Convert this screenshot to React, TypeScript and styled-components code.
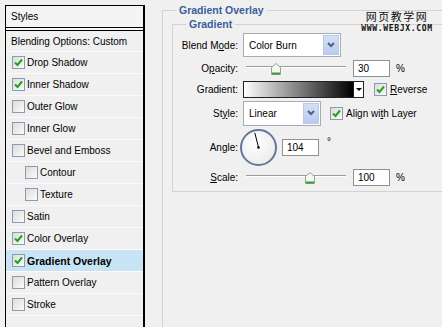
import styled, { createGlobalStyle } from "styled-components"

const Global = createGlobalStyle`
  body {
    margin: 0;
    background: #f0f0f0;
    font-family: "Liberation Sans", Arial, sans-serif;
    font-size: 10px;
    color: #000;
    overflow: hidden;
  }
`

const Page = styled.div`
  display: flex;
  position: relative;
  width: 442px;
  height: 327px;
  overflow: hidden;
`

const Sidebar = styled.div`
  box-sizing: border-box;
  width: 140px;
  height: 340px;
  margin: 5px 0 0 5px;
  border: 1px solid #000;
  border-right-width: 2px;
  background: #f0f0f0;
  flex-shrink: 0;
`

const Header = styled.div`
  height: 21px;
  line-height: 21px;
  padding-left: 5px;
  border-bottom: 4px double #000;
  background: #f4f4f4;
`

const Item = styled.div<{ $indent?: boolean; $active?: boolean; $h?: number }>`
  display: flex;
  align-items: center;
  gap: 2px;
  height: ${p => p.$h ?? 21}px;
  padding-left: ${p => (p.$indent ? 19 : 6)}px;
  border-bottom: 1px solid #fbfbfb;
  background: ${p => (p.$active ? "#c8e4f4" : "transparent")};
  font-weight: ${p => (p.$active ? 700 : 400)};
  font-size: ${p => (p.$active ? 10.5 : 10)}px;
`

const Plain = styled(Item)`
  padding-left: 5px;
`

const Box = styled.span`
  box-sizing: border-box;
  display: inline-flex;
  align-items: center;
  justify-content: center;
  width: 13px;
  height: 13px;
  border: 1px solid #8a9bb3;
  background: linear-gradient(135deg, #dcdcd8, #fbfbfb);
  flex-shrink: 0;
`

const Check = ({ on }: { on?: boolean }) => (
  <Box>
    {on && (
      <svg width="9" height="9" viewBox="0 0 9 9">
        <path d="M1 4.5 L3.5 7 L8 1.5" fill="none" stroke="#21a121" strokeWidth="2" />
      </svg>
    )}
  </Box>
)

const Main = styled.div`
  flex: 1;
  margin-left: 17px;
`

const Group = styled.fieldset`
  box-sizing: border-box;
  margin: 4px 0 0 0;
  padding: 0;
  width: 320px;
  height: 340px;
  border: 1px solid #d2d2d2;
`

const Inner = styled.fieldset`
  margin: 1px 0 0 9px;
  padding: 2px 0 4px 0;
  border: 1px solid #d2d2d2;
`

const Legend = styled.legend`
  margin-left: 13px;
  padding: 0 3px;
  line-height: 13px;
  font-size: 10.5px;
  font-weight: 700;
  color: #3b5d9c;
`

const Field = styled.div<{ $h: number }>`
  display: flex;
  align-items: center;
  height: ${p => p.$h}px;
`

const Label = styled.span`
  width: 65px;
  margin-right: 5px;
  text-align: right;
  white-space: nowrap;
  flex-shrink: 0;
`

const Select = styled.div<{ $w: number; $h: number }>`
  box-sizing: border-box;
  display: flex;
  align-items: center;
  justify-content: space-between;
  width: ${p => p.$w}px;
  height: ${p => p.$h}px;
  padding: 1px 1px 1px 5px;
  border: 1px solid #a5acb5;
  background: #fff;
`

const DropButton = styled.span`
  box-sizing: border-box;
  display: flex;
  align-items: center;
  justify-content: center;
  width: 16px;
  height: 100%;
  border: 1px solid #b9c8e6;
  background: linear-gradient(#d4e0f6, #b9cbee);
`

const Chevron = () => (
  <svg width="8" height="6" viewBox="0 0 8 6">
    <path d="M1 1 L4 4 L7 1" fill="none" stroke="#4d6185" strokeWidth="2" />
  </svg>
)

const Input = styled.span`
  box-sizing: border-box;
  display: inline-block;
  width: 37px;
  height: 17px;
  line-height: 15px;
  padding-left: 4px;
  border: 1px solid #8e9094;
  background: #fff;
`

const Unit = styled.span<{ $sup?: boolean }>`
  margin-left: ${p => (p.$sup ? 8 : 6)}px;
  align-self: ${p => (p.$sup ? "flex-start" : "center")};
  margin-top: ${p => (p.$sup ? 9 : 0)}px;
`

const Track = styled.div`
  position: relative;
  width: 100px;
  height: 14px;
  margin: 0 7px 0 3px;
  &::before {
    content: "";
    position: absolute;
    left: 0;
    right: 0;
    top: 5px;
    height: 1px;
    background: #9c9c9c;
    border-bottom: 1px solid #fff;
  }
`

const Thumb = styled.svg`
  position: absolute;
  top: 2px;
  margin-left: -5px;
`

const Slider = ({ pos }: { pos: number }) => (
  <Track>
    <Thumb width="10" height="12" viewBox="0 0 10 12" style={{ left: `${pos}%` }}>
      <path d="M0.5 4.5 L5 0.5 L9.5 4.5 L9.5 11.5 L0.5 11.5 Z" fill="#f5f5f5" stroke="#8ea98e" />
      <path d="M1 10.5 H9" stroke="#3d9b3d" strokeWidth="2" />
    </Thumb>
  </Track>
)

const GradientBar = styled.div`
  box-sizing: border-box;
  width: 111px;
  height: 17px;
  border: 1px solid #222;
  background: linear-gradient(to right, #fff, #000);
`

const Arrow = styled.span`
  box-sizing: border-box;
  display: flex;
  align-items: center;
  justify-content: center;
  width: 10px;
  height: 17px;
  border: 1px solid #222;
  border-left: none;
  background: #fff;
  &::after {
    content: "";
    border-left: 3px solid transparent;
    border-right: 3px solid transparent;
    border-top: 3px solid #000;
  }
`

const Option = styled.span<{ $gap: number }>`
  display: flex;
  align-items: center;
  gap: 3px;
  margin-left: ${p => p.$gap}px;
`

const Dial = styled.div`
  box-sizing: border-box;
  width: 37px;
  height: 37px;
  margin: 0 5px 0 -3px;
  border: 2px solid #65789a;
  border-radius: 50%;
  background: radial-gradient(circle at 40% 35%, #ffffff, #e6e6e6);
`

const Watermark = styled.div`
  position: absolute;
  top: 10px;
  left: 360px;
  width: 74px;
  text-align: center;
  color: #111;
`

const WmCn = styled.div`
  font-family: "Noto Sans CJK SC", sans-serif;
  font-size: 11px;
  line-height: 12px;
  letter-spacing: 1.5px;
`

const WmEn = styled.div`
  margin-top: 3px;
  font-family: "DejaVu Sans Mono", monospace;
  font-size: 8px;
  font-weight: 700;
  line-height: 8px;
  letter-spacing: 0.7px;
`

const items: { name: string; on?: boolean; indent?: boolean; active?: boolean }[] = [
  { name: "Drop Shadow", on: true },
  { name: "Inner Shadow", on: true },
  { name: "Outer Glow" },
  { name: "Inner Glow" },
  { name: "Bevel and Emboss" },
  { name: "Contour", indent: true },
  { name: "Texture", indent: true },
  { name: "Satin" },
  { name: "Color Overlay", on: true },
  { name: "Gradient Overlay", on: true, active: true },
  { name: "Pattern Overlay" },
  { name: "Stroke" },
]

export default function App() {
  return (
    <Page>
      <Global />
      <Sidebar>
        <Header>Styles</Header>
        <Plain $h={20}>Blending Options: Custom</Plain>
        {items.map(i => (
          <Item key={i.name} $indent={i.indent} $active={i.active}>
            <Check on={i.on} />
            {i.name}
          </Item>
        ))}
      </Sidebar>
      <Main>
        <Group>
          <Legend>Gradient Overlay</Legend>
          <Inner>
            <Legend>Gradient</Legend>
            <Field $h={24}>
              <Label>Blend M<u>o</u>de:</Label>
              <Select $w={98} $h={24}>
                Color Burn
                <DropButton><Chevron /></DropButton>
              </Select>
            </Field>
            <Field $h={22}>
              <Label>O<u>p</u>acity:</Label>
              <Slider pos={30} />
              <Input>30</Input>
              <Unit>%</Unit>
            </Field>
            <Field $h={20}>
              <Label>Gradient:</Label>
              <GradientBar />
              <Arrow />
              <Option $gap={10}>
                <Check on />
                <span><u>R</u>everse</span>
              </Option>
            </Field>
            <Field $h={28}>
              <Label>St<u>y</u>le:</Label>
              <Select $w={78} $h={25}>
                Linear
                <DropButton><Chevron /></DropButton>
              </Select>
              <Option $gap={9}>
                <Check on />
                <span>Align wi<u>t</u>h Layer</span>
              </Option>
            </Field>
            <Field $h={40}>
              <Label>An<u>g</u>le:</Label>
              <Dial>
                <svg width="33" height="33" viewBox="0 0 33 33">
                  <line x1="16.5" y1="16.5" x2="12.8" y2="1.8" stroke="#000" strokeWidth="1" />
                  <circle cx="16.5" cy="16.5" r="1.3" fill="#000" />
                </svg>
              </Dial>
              <Input>104</Input>
              <Unit $sup>°</Unit>
            </Field>
            <Field $h={20}>
              <Label><u>S</u>cale:</Label>
              <Slider pos={64} />
              <Input>100</Input>
              <Unit>%</Unit>
            </Field>
          </Inner>
        </Group>
      </Main>
      <Watermark>
        <WmCn>网页教学网</WmCn>
        <WmEn>WWW.WEBJX.COM</WmEn>
      </Watermark>
    </Page>
  )
}
